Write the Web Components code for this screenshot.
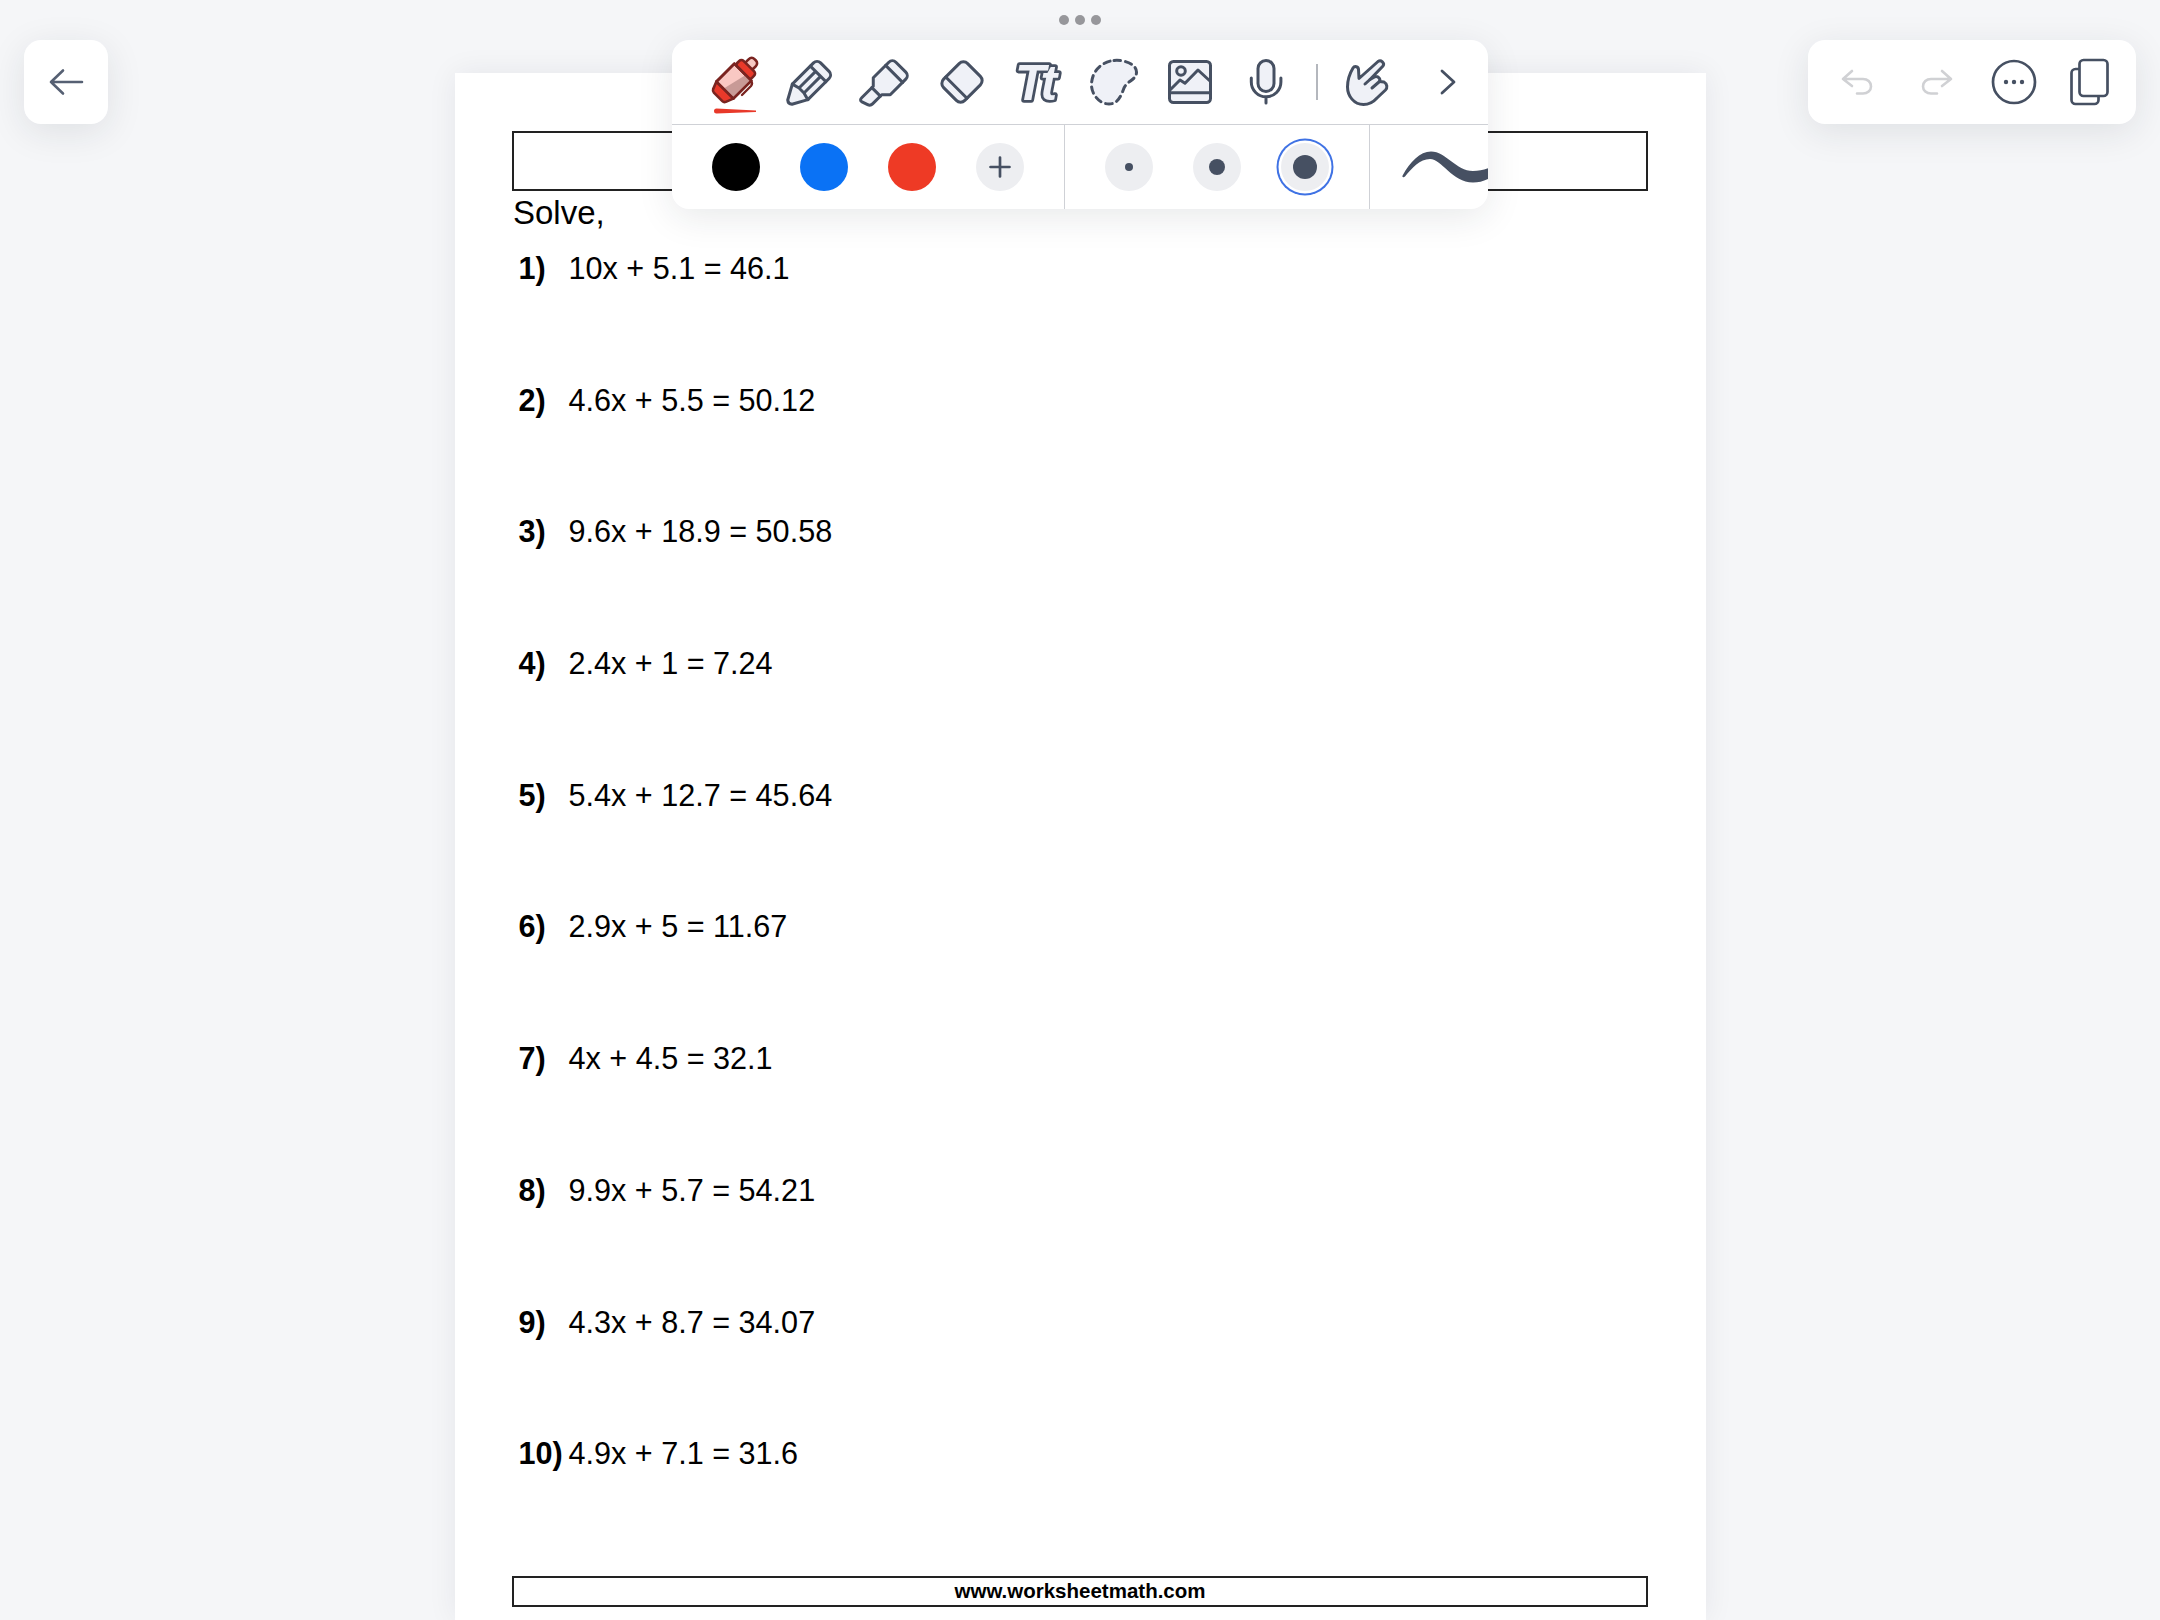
<!DOCTYPE html>
<html>
<head>
<meta charset="utf-8">
<style>
  html, body { margin: 0; height: 100%; background: #f5f6f8; overflow: hidden; }
  svg { display: block; overflow: visible; }
</style>
</head>
<body>
<note-app>
  <ws-page slot="page">
    <ws-problem num="1)">10x + 5.1 = 46.1</ws-problem>
    <ws-problem num="2)">4.6x + 5.5 = 50.12</ws-problem>
    <ws-problem num="3)">9.6x + 18.9 = 50.58</ws-problem>
    <ws-problem num="4)">2.4x + 1 = 7.24</ws-problem>
    <ws-problem num="5)">5.4x + 12.7 = 45.64</ws-problem>
    <ws-problem num="6)">2.9x + 5 = 11.67</ws-problem>
    <ws-problem num="7)">4x + 4.5 = 32.1</ws-problem>
    <ws-problem num="8)">9.9x + 5.7 = 54.21</ws-problem>
    <ws-problem num="9)">4.3x + 8.7 = 34.07</ws-problem>
    <ws-problem num="10)">4.9x + 7.1 = 31.6</ws-problem>
  </ws-page>

  <float-panel slot="panels" style="left:24px;top:40px;width:84px;height:84px">
    <tool-button width="84" height="84">
      <svg width="48" height="48" viewBox="0 0 48 48" fill="none" stroke="#566073" stroke-width="2.6" stroke-linecap="round" stroke-linejoin="round"><path d="M9 24H40M21 12.500L9 24L21 35.500"/></svg>
    </tool-button>
  </float-panel>

  <float-panel slot="panels" style="left:672px;top:40px;width:816px;height:169px">
    <draw-toolbar>
      <tool-button slot="tools">
        <svg width="48" height="48" viewBox="0 0 48 48" stroke="#7a2420" stroke-width="2.6" stroke-linejoin="round" stroke-linecap="round">
          <path d="M6.500 50.500L46 52.500V54L6.500 55.500A2.500 2.500 0 0 1 6.500 50.500Z" fill="#e8392a" stroke="none"/>
          <path d="M32 37L41 28Q43 25.500 41 23" fill="none" stroke-width="2.400"/>
          <g transform="translate(24 23) rotate(45)">
            <rect x="-5" y="-30" width="10" height="11" rx="4" fill="#f6c9c3"/>
            <rect x="-10.500" y="-21" width="21" height="9" rx="3" fill="#e8392a"/>
            <path d="M-12 -12.500H12V13L-12 13Z" fill="#f9c8c3"/>
            <path d="M4 -12.500H12V13H-2Z" fill="#c89a96" stroke="none"/>
            <path d="M-12 -12.500H12V13H-12Z" fill="none"/>
            <path d="M-12 13H12L9 20.500Q8 22.500 6 22.500H-6Q-8 22.500 -9 20.500Z" fill="#e8392a"/>
          </g>
        </svg>
      </tool-button>
      <tool-button slot="tools">
        <svg width="48" height="48" viewBox="0 0 48 48" fill="#eff1f7" stroke="#465062" stroke-width="3" stroke-linejoin="round" stroke-linecap="round">
          <g transform="translate(24 24) rotate(45)">
            <path d="M-11 -16a5 5 0 0 1 5 -5h12a5 5 0 0 1 5 5V14L3 28.500Q0 31 -3 28.500L-11 14Z"/>
            <path d="M-11 -11.500H11M-3.500 -11.500V12M3.500 -11.500V12M-11 14L-3.500 12H3.500L11 14" fill="none"/>
          </g>
        </svg>
      </tool-button>
      <tool-button slot="tools">
        <svg width="48" height="48" viewBox="0 0 48 48" fill="#eff1f7" stroke="#465062" stroke-width="3" stroke-linejoin="round" stroke-linecap="round">
          <g transform="translate(24 24) rotate(45)">
            <path d="M-12 -16a5 5 0 0 1 5 -5h14a5 5 0 0 1 5 5V6L6 12V25Q6 28 3 29L-3 31Q-6 32 -6 28V12L-12 6Z"/>
            <path d="M-12 -11.500H12M-6 14H6" fill="none"/>
          </g>
        </svg>
      </tool-button>
      <tool-button slot="tools">
        <svg width="48" height="48" viewBox="0 0 48 48" fill="#eff1f7" stroke="#465062" stroke-width="3" stroke-linejoin="round" stroke-linecap="round">
          <g transform="translate(24 24) rotate(45)">
            <rect x="-15" y="-17" width="30" height="34" rx="6"/>
            <path d="M-15 8H15" fill="none"/>
          </g>
        </svg>
      </tool-button>
      <tool-button slot="tools">
        <svg width="48" height="48" viewBox="0 0 48 48">
          <text x="1" y="41.500" font-family="'Liberation Sans', sans-serif" font-weight="700" font-style="italic" font-size="50" letter-spacing="-5" fill="#eff1f7" stroke="#465062" stroke-width="5.600" stroke-linejoin="round" paint-order="stroke">Tt</text>
        </svg>
      </tool-button>
      <tool-button slot="tools">
        <svg width="48" height="48" viewBox="0 0 48 48" fill="#eff1f7" stroke="#465062" stroke-width="3" stroke-linecap="round" stroke-dasharray="6.500 5">
          <path d="M24 2.500C34 1.500 46.500 6 46.500 14C46.500 22 38 22 34 30C31 38 28 46 19 46C9 46 1.500 36 1.500 27C1.500 13 12 3.500 24 2.500Z"/>
        </svg>
      </tool-button>
      <tool-button slot="tools">
        <svg width="48" height="48" viewBox="0 0 48 48" fill="none" stroke="#465062" stroke-width="3" stroke-linejoin="round" stroke-linecap="round">
          <rect x="3.500" y="3.500" width="41" height="41" rx="4" fill="#eff1f7"/>
          <path d="M3.500 34.700H44.500M4 32L14 22L19 25.300L32 12L44.500 23.500"/>
          <circle cx="15" cy="13" r="4.300"/>
        </svg>
      </tool-button>
      <tool-button slot="tools">
        <svg width="48" height="48" viewBox="0 0 48 48" fill="none" stroke="#465062" stroke-width="3" stroke-linecap="round">
          <rect x="16" y="2.500" width="16" height="31" rx="8" fill="#eff1f7"/>
          <path d="M9.300 20v4a14.800 14.800 0 0 0 29.600 0v-4M24 39V45"/>
        </svg>
      </tool-button>
      <span slot="tools" class="gap"></span>
      <tool-button slot="tools" style="margin-left:11px">
        <svg width="48" height="48" viewBox="0 0 48 48" fill="#eff1f7" stroke="#465062" stroke-width="3" stroke-linejoin="round" stroke-linecap="round">
          <path d="M4.500 29C4.500 22 7 15 10 10C11.500 7.500 15.500 8.500 15.500 11.500L16 20.500L35 3.500C38 1.500 42 5 40 8L27 21.500L31.500 19C34.500 17.500 38 20.500 36.500 23.500L41 24C44.500 26 44.500 30 42.500 32L34 40C30 44.500 25 46.500 20.500 46.500C11 46.500 4.500 38 4.500 29Z"/>
          <path d="M27 21.500L22 26M36.500 23.500L29 30" fill="none"/>
        </svg>
      </tool-button>
      <tool-button slot="tools" style="margin-left:5px">
        <svg width="48" height="48" viewBox="0 0 48 48" fill="none" stroke="#465062" stroke-width="2.800" stroke-linecap="round" stroke-linejoin="round"><path d="M18 13L30 24L18 35"/></svg>
      </tool-button>

      <color-dot slot="colors" color="#000000"></color-dot>
      <color-dot slot="colors" color="#0a72f5"></color-dot>
      <color-dot slot="colors" color="#ee3a25"></color-dot>
      <color-dot slot="colors" color="#edeef1">
        <svg width="24" height="24" viewBox="0 0 24 24" fill="none" stroke="#465062" stroke-width="2.700" stroke-linecap="round"><path d="M12 2.500V21.500M2.500 12H21.500"/></svg>
      </color-dot>

      <size-dot slot="sizes" size="8"></size-dot>
      <size-dot slot="sizes" size="16"></size-dot>
      <size-dot slot="sizes" size="24" selected></size-dot>

      <svg slot="stroke" width="118" height="84" viewBox="1370 125 118 84" fill="#465062" stroke="none">
        <path d="M1402.600 175.500C1410 162 1420 151.500 1431 151.500C1446 151.500 1456 171 1473 171C1479 171 1484 170 1490 167.500V178C1484 181 1479 182.500 1473 182.500C1452 182.500 1442 159 1430 159C1420 159 1412 168 1405 176.500C1403.500 178 1401.800 177 1402.600 175.500Z"/>
      </svg>
    </draw-toolbar>
  </float-panel>

  <float-panel slot="panels" style="left:1808px;top:40px;width:328px;height:84px">
    <history-bar>
      <tool-button width="80" height="84">
        <svg width="32" height="26" viewBox="0 0 32 26" fill="none" stroke="#d0d1d4" stroke-width="2.600" stroke-linecap="round" stroke-linejoin="round"><path d="M11 2L2 10L11 17M2 10H22C26.500 10 30 13 30 17.500C30 21.500 26.500 24.500 22 24.500H16"/></svg>
      </tool-button>
      <tool-button width="80" height="84">
        <svg width="32" height="26" viewBox="0 0 32 26" fill="none" stroke="#d0d1d4" stroke-width="2.600" stroke-linecap="round" stroke-linejoin="round"><path d="M21 2L30 10L21 17M30 10H10C5.500 10 2 13 2 17.500C2 21.500 5.500 24.500 10 24.500H16"/></svg>
      </tool-button>
      <tool-button width="75" height="84">
        <svg width="48" height="48" viewBox="0 0 48 48" fill="none" stroke="#465062" stroke-width="2.700"><circle cx="24" cy="24" r="21"/><circle cx="16" cy="24" r="2.200" fill="#465062" stroke="none"/><circle cx="24" cy="24" r="2.200" fill="#465062" stroke="none"/><circle cx="32" cy="24" r="2.200" fill="#465062" stroke="none"/></svg>
      </tool-button>
      <tool-button width="77" height="84">
        <svg width="40" height="48" viewBox="0 0 40 48" fill="#fff" stroke="#465062" stroke-width="2.700" stroke-linejoin="round"><rect x="1.500" y="11" width="27" height="35" rx="4"/><rect x="9.500" y="2" width="28" height="36" rx="4"/></svg>
      </tool-button>
    </history-bar>
  </float-panel>
</note-app>

<script>
// small helper, every element has the same shadow setup
function shadow(el, html) {
  el.attachShadow({ mode: "open" }).innerHTML = html;
}

class NoteApp extends HTMLElement {
  constructor() {
    super();
    shadow(this, `
      <style>
        :host { display: block; position: relative; width: 2160px; height: 1620px; overflow: hidden; background: #f5f6f8; }
        .dots { position: absolute; top: 15px; left: 1059px; display: flex; gap: 6px; }
        .dots i { width: 10px; height: 10px; border-radius: 50%; background: #98989c; }
      </style>
      <slot name="page"></slot>
      <div class="dots"><i></i><i></i><i></i></div>
      <slot name="panels"></slot>
    `);
  }
}

class WsPage extends HTMLElement {
  constructor() {
    super();
    shadow(this, `
      <style>
        :host { display: block; box-sizing: border-box; width: 1251px; height: 1547px; margin: 73px 0 0 455px; padding: 58px 58px 0 57px;
          background: #fff; color: #000; box-shadow: 0 0 28px rgba(30,35,50,.07);
          font-family: "Liberation Sans", Arial, sans-serif; }
        .title { box-sizing: border-box; height: 60px; border: 2px solid #222; }
        .solve { font-size: 33px; line-height: 43px; height: 43px; padding-left: 1px; }
        .list { display: grid; grid-auto-rows: 131.7px; margin-top: 14px; }
        .foot { box-sizing: border-box; height: 31px; margin-top: 11px; border: 2px solid #222; text-align: center;
          font-size: 20.5px; font-weight: 700; line-height: 26px; }
      </style>
      <div class="title"></div>
      <div class="solve">Solve,</div>
      <div class="list"><slot></slot></div>
      <div class="foot">www.worksheetmath.com</div>
    `);
  }
}

class WsProblem extends HTMLElement {
  constructor() {
    super();
    shadow(this, `
      <style>
        :host { display: flex; padding-left: 6.5px; font-size: 30.6px; line-height: 40px; align-items: flex-start; }
        b { width: 50px; flex: none; }
      </style>
      <b></b><span><slot></slot></span>
    `);
  }
  connectedCallback() {
    this.shadowRoot.querySelector("b").textContent = this.getAttribute("num");
  }
}

class FloatPanel extends HTMLElement {
  constructor() {
    super();
    shadow(this, `
      <style>
        :host { display: block; position: absolute; background: #fff; border-radius: 17px;
          box-shadow: 0 8px 36px rgba(30,35,50,.10); }
        .clip { width: 100%; height: 100%; border-radius: inherit; overflow: hidden; }
      </style>
      <div class="clip"><slot></slot></div>
    `);
  }
}

class ToolButton extends HTMLElement {
  constructor() {
    super();
    shadow(this, `
      <style>
        :host { display: flex; flex: none; align-items: center; justify-content: center; width: 76px; height: 84px; }
      </style>
      <slot></slot>
    `);
  }
  connectedCallback() {
    if (this.hasAttribute("width")) this.style.width = this.getAttribute("width") + "px";
    if (this.hasAttribute("height")) this.style.height = this.getAttribute("height") + "px";
  }
}

class DrawToolbar extends HTMLElement {
  constructor() {
    super();
    shadow(this, `
      <style>
        :host { display: block; }
        .tools { display: flex; height: 84px; padding-left: 24px; border-bottom: 1px solid #cfd1d6; }
        .bottom { display: flex; height: 84px; }
        .colors { display: flex; padding: 0 20px; border-right: 1px solid #cfd1d6; }
        .sizes { display: flex; padding: 0 20px; border-right: 1px solid #cfd1d6; }
        .stroke { flex: 1; overflow: hidden; }
        ::slotted(.gap) { width: 1.5px; height: 36px; margin: 24px .5px 0 12px; background: #b4b7bd; flex: none; }
      </style>
      <div class="tools"><slot name="tools"></slot></div>
      <div class="bottom">
        <div class="colors"><slot name="colors"></slot></div>
        <div class="sizes"><slot name="sizes"></slot></div>
        <div class="stroke"><slot name="stroke"></slot></div>
      </div>
    `);
  }
}

class HistoryBar extends HTMLElement {
  constructor() {
    super();
    shadow(this, `
      <style>
        :host { display: flex; padding-left: 8.5px; }
      </style>
      <slot></slot>
    `);
  }
}

class ColorDot extends HTMLElement {
  constructor() {
    super();
    shadow(this, `
      <style>
        :host { display: flex; width: 88px; height: 84px; align-items: center; justify-content: center; }
        .dot { display: flex; width: 48px; height: 48px; border-radius: 50%; align-items: center; justify-content: center; }
      </style>
      <div class="dot"><slot></slot></div>
    `);
  }
  connectedCallback() {
    this.shadowRoot.querySelector(".dot").style.background = this.getAttribute("color");
  }
}

class SizeDot extends HTMLElement {
  constructor() {
    super();
    shadow(this, `
      <style>
        :host { display: flex; width: 88px; height: 84px; align-items: center; justify-content: center; }
        .dot { display: flex; width: 48px; height: 48px; border-radius: 50%; background: #edeef1; align-items: center; justify-content: center; }
        :host([selected]) .dot { box-shadow: 0 0 0 2.500px #fff, 0 0 0 4.500px #3f72e4; }
        i { display: block; border-radius: 50%; background: #465062; }
      </style>
      <div class="dot"><i></i></div>
    `);
  }
  connectedCallback() {
    const s = this.getAttribute("size") + "px";
    const i = this.shadowRoot.querySelector("i");
    i.style.width = s;
    i.style.height = s;
  }
}

customElements.define("note-app", NoteApp);
customElements.define("ws-page", WsPage);
customElements.define("ws-problem", WsProblem);
customElements.define("float-panel", FloatPanel);
customElements.define("tool-button", ToolButton);
customElements.define("draw-toolbar", DrawToolbar);
customElements.define("history-bar", HistoryBar);
customElements.define("color-dot", ColorDot);
customElements.define("size-dot", SizeDot);
</script>
</body>
</html>
